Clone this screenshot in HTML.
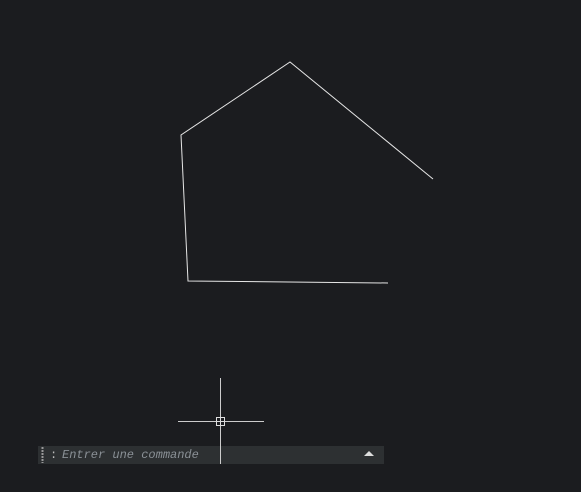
<!DOCTYPE html>
<html><head><style>
body{margin:0;width:581px;height:492px;background:#1b1c1f;overflow:hidden;position:relative;font-family:"Liberation Mono",monospace}
.bar{position:absolute;left:38px;top:446px;width:346px;height:18px;background:#2d3032}
.txt{position:absolute;left:62px;top:447px;font-size:12px;font-style:italic;color:#8a9096;line-height:16px}
.col{position:absolute;left:50px;top:447px;font-size:12px;color:#bbb;line-height:16px}
</style></head><body>
<div class="bar"></div>
<svg width="581" height="492" style="position:absolute;left:0;top:0">
<polyline points="433,179 290,62 181,135 188,281 388,283" fill="none" stroke="#e6e6e6" stroke-width="1"/>
<line x1="220.5" y1="378" x2="220.5" y2="464" stroke="#ccc" stroke-width="1"/>
<line x1="178" y1="421.5" x2="264" y2="421.5" stroke="#ccc" stroke-width="1"/>
<rect x="216.5" y="417.5" width="8" height="8" fill="#1b1c1f" stroke="#ddd"/>
<line x1="220.5" y1="417" x2="220.5" y2="426" stroke="#ddd"/>
<line x1="216" y1="421.5" x2="225" y2="421.5" stroke="#ddd"/>
<line x1="42.5" y1="447" x2="42.5" y2="463" stroke="#999" stroke-width="2" stroke-dasharray="2,1"/>
<polygon points="364,456 374,456 369,451" fill="#ddd"/>
</svg>
<div class="col">:</div>
<div class="txt">Entrer une commande</div>
</body></html>
